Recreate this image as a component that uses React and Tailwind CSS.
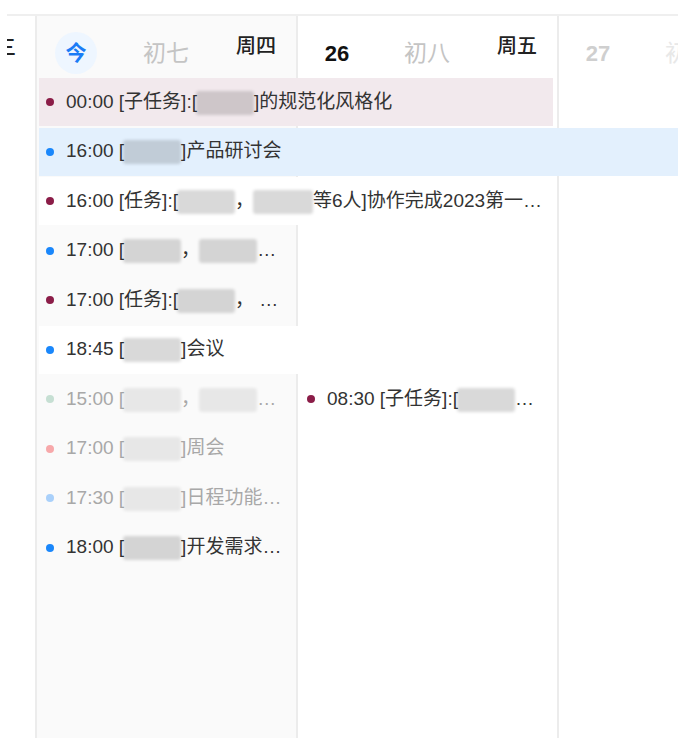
const font = { fontFamily: "'Liberation Sans', 'Noto Sans CJK SC', sans-serif" };

const Blur = ({ w = 'w-[58px]' }) => (
  <span className={`inline-block ${w} h-[24px] -ml-[1px] align-middle rounded-[3px] bg-black/[0.15] blur-[1.5px]`} />
);

const events = [
  { pos: 'row-start-2 col-start-2 col-span-2 mr-[4px]', bg: 'bg-[#f2e9ed]', dot: 'bg-[#8b1d48]', body: <>00:00 [子任务]:[<Blur />]的规范化风格化</> },
  { pos: 'row-start-3 col-start-2 col-span-3', bg: 'bg-[#e3f0fd]', dot: 'bg-[#1a87fb]', body: <>16:00 [<Blur />]产品研讨会</> },
  { pos: 'row-start-4 col-start-2 col-span-2 mr-[4px] -ml-[1px]', bg: 'bg-white', dot: 'bg-[#8b1d48]', body: <>16:00 [任务]:[<Blur />，<Blur w="w-[60px]" />等6人]协作完成2023第一…</> },
  { pos: 'row-start-5 col-start-2', bg: '', dot: 'bg-[#1a87fb]', body: <>17:00 [<Blur />，<Blur />…</> },
  { pos: 'row-start-6 col-start-2', bg: '', dot: 'bg-[#8b1d48]', body: <>17:00 [任务]:[<Blur />， …</> },
  { pos: 'row-start-7 col-start-2 -mr-[2px] -ml-[1px]', bg: 'bg-white', dot: 'bg-[#1a87fb]', body: <>18:45 [<Blur />]会议</> },
  { pos: 'row-start-8 col-start-2', bg: '', dot: 'bg-[#c6dfd3]', faded: true, body: <>15:00 [<Blur />，<Blur />…</> },
  { pos: 'row-start-8 col-start-3', bg: '', dot: 'bg-[#8b1d48]', body: <>08:30 [子任务]:[<Blur />…</> },
  { pos: 'row-start-9 col-start-2', bg: '', dot: 'bg-[#f7a8aa]', faded: true, body: <>17:00 [<Blur />]周会</> },
  { pos: 'row-start-10 col-start-2', bg: '', dot: 'bg-[#a9d0fa]', faded: true, body: <>17:30 [<Blur />]日程功能…</> },
  { pos: 'row-start-11 col-start-2', bg: '', dot: 'bg-[#1a87fb]', body: <>18:00 [<Blur />]开发需求…</> },
];

function DayHeader({ pos, day, lunar, week, lunarCls }) {
  return (
    <div className={`${pos} row-start-1 flex items-start pt-[16px] pl-[20px] gap-[48px]`}>
      {day}
      <div className={`w-[42px] h-[42px] shrink-0 flex items-center justify-center whitespace-nowrap text-[23px] ${lunarCls}`}>{lunar}</div>
      {week && <div className="w-[42px] h-[28px] shrink-0 flex items-center justify-center whitespace-nowrap text-[20px] font-medium text-[#222]">{week}</div>}
    </div>
  );
}

export default function App() {
  return (
    <div className="w-[678px] h-[738px] overflow-hidden bg-white pl-[7px] pt-[14px]" style={font}>
      <div className="grid h-[724px] border-t-2 border-[#efefef] grid-cols-[28px_261px_261px_121px] grid-rows-[62px_repeat(10,49.5px)_1fr]">
        {/* column backgrounds */}
        <div className="col-start-1 row-span-full bg-white" />
        <div className="col-start-2 row-span-full bg-[#fafafa] border-l-2 border-[#ececec]" />
        <div className="col-start-3 row-span-full bg-white border-l-2 border-[#ececec]" />
        <div className="col-start-4 row-span-full bg-white border-l-2 border-[#ececec]" />

        {/* headers */}
        <div className="col-start-1 row-start-1 overflow-hidden flex justify-end pr-[19px] pt-[18px]">
          <span className="shrink-0 whitespace-nowrap text-[20px] leading-[28px] font-medium text-[#222]">周三</span>
        </div>
        <DayHeader
          pos="col-start-2"
          day={<div className="w-[42px] h-[42px] shrink-0 rounded-full bg-[#eef6ff] flex items-center justify-center text-[21px] font-bold text-[#1a7cf6]">今</div>}
          lunar="初七" lunarCls="text-[#c4c4c4]" week="周四"
        />
        <DayHeader
          pos="col-start-3"
          day={<div className="w-[42px] h-[42px] shrink-0 flex items-center justify-center text-[22px] font-bold text-[#111]">26</div>}
          lunar="初八" lunarCls="text-[#c4c4c4]" week="周五"
        />
        <DayHeader
          pos="col-start-4 overflow-hidden"
          day={<div className="w-[42px] h-[42px] shrink-0 flex items-center justify-center text-[22px] font-bold text-[#cfcfcf]">27</div>}
          lunar="初九" lunarCls="text-[#e8e8e8]"
        />

        {/* events */}
        {events.map((e, i) => (
          <div key={i} className={`${e.pos} ${e.bg} ml-[4px] h-[48px] self-start flex items-center pl-[7px] overflow-hidden whitespace-nowrap`}>
            <span className={`w-[8px] h-[8px] rounded-full shrink-0 ${e.dot}`} />
            <span className={`ml-[12px] text-[19px] ${e.faded ? 'text-[#a8a8a8] [&>span]:opacity-50' : 'text-[#333]'}`}>{e.body}</span>
          </div>
        ))}
      </div>
    </div>
  );
}
